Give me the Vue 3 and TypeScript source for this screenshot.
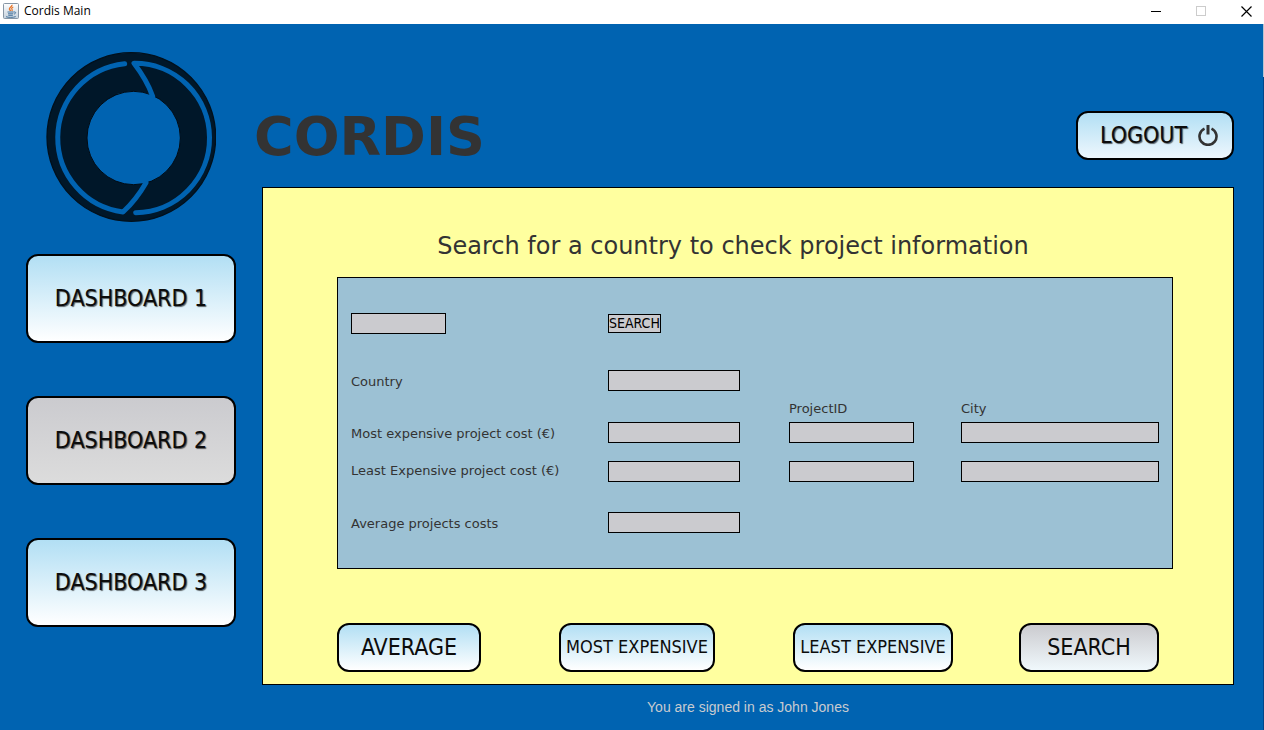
<script setup lang="ts">
import { reactive, ref } from 'vue'

interface Dashboard {
  id: number
  label: string
}

interface CostRow {
  key: 'most' | 'least'
  label: string
}

const dashboards: Dashboard[] = [
  { id: 1, label: 'DASHBOARD 1' },
  { id: 2, label: 'DASHBOARD 2' },
  { id: 3, label: 'DASHBOARD 3' },
]

const costRows: CostRow[] = [
  { key: 'most', label: 'Most expensive project cost (€)' },
  { key: 'least', label: 'Least Expensive project cost (€)' },
]

const active = ref(2)
const query = ref('')
const userName = ref('John Jones')
const result = reactive({
  country: '',
  average: '',
  most: { cost: '', project: '', city: '' },
  least: { cost: '', project: '', city: '' },
})
</script>

<template>
  <div class="window">
    <header class="titlebar">
      <svg class="app-icon" viewBox="0 0 16 16" aria-hidden="true">
        <defs>
          <linearGradient id="cup-bg" x1="0" y1="0" x2="0" y2="1">
            <stop offset="0" stop-color="#ffffff" />
            <stop offset="1" stop-color="#c3d0dc" />
          </linearGradient>
        </defs>
        <rect x=".5" y=".5" width="15" height="15" rx="1" fill="url(#cup-bg)" stroke="#8796a5" />
        <path d="M8.800 1.800c1 1.800-2.800 2.400-2.300 4.300.2.800 1 1.300 1 2" fill="none" stroke="#e8762c" stroke-width="1.500" />
        <path d="M10.300 4c-2 .8-1.900 1.600-1.200 2.500.4.5 0 1.200-.4 1.500" fill="none" stroke="#e8762c" stroke-width="1.200" />
        <path d="M4.500 9h6.300M5 10.800h5.300M5.300 12.300h4.500M3 13.700c2 .9 7.500.9 9.700-.1M11 9c2.200-.6 2.200 1.600 0 2.100" fill="none" stroke="#46749d" />
      </svg>
      <span>Cordis Main</span>
      <div class="window-controls">
        <button type="button" aria-label="Minimize">
          <svg viewBox="0 0 11 11"><path d="M0 5.500h10" stroke="#000" /></svg>
        </button>
        <button type="button" aria-label="Maximize" disabled>
          <svg viewBox="0 0 11 11"><rect x=".5" y=".5" width="9" height="9" fill="none" stroke="#ccc" /></svg>
        </button>
        <button type="button" aria-label="Close">
          <svg viewBox="0 0 11 11"><path d="M.5.5l10 10M10.500.5l-10 10" stroke="#000" stroke-width="1.200" /></svg>
        </button>
      </div>
    </header>

    <div class="body">
      <aside class="sidebar">
        <svg class="logo" viewBox="49 51 510 510" role="img" aria-label="Cordis logo">
          <circle cx="305" cy="306" r="253" fill="#001729" stroke="#00101c" stroke-width="4" />
          <circle cx="312" cy="309" r="140" fill="#0063b1" stroke="#000b14" stroke-width="3" />
          <g fill="none" stroke="#0063b1" stroke-width="15" stroke-linecap="round" stroke-linejoin="round">
            <path d="M285 86A224 224 0 0 0 280 531Q320 494 349 443" />
            <path d="M369 184Q352 136 313 85A224 224 0 0 1 318 533" />
          </g>
        </svg>
        <nav class="nav">
          <button
            v-for="d in dashboards"
            :key="d.id"
            type="button"
            class="btn btn-nav"
            :class="{ active: d.id === active }"
            @click="active = d.id"
          >
            {{ d.label }}
          </button>
        </nav>
      </aside>

      <div class="content">
        <div class="topbar">
          <h1>CORDIS</h1>
          <button type="button" class="btn btn-logout">
            LOGOUT
            <svg viewBox="0 0 20 22" aria-hidden="true">
              <path d="M6.500 4.600a8.500 8.500 0 1 0 7 0" fill="none" stroke="#333" stroke-width="2.600" />
              <path d="M10 1v9.500" stroke="#333" stroke-width="3" />
            </svg>
          </button>
        </div>

        <main class="panel">
          <h2>Search for a country to check project information</h2>

          <form class="form" @submit.prevent>
            <input v-model="query" class="field c1 query" type="text" aria-label="Search country" />
            <button type="submit" class="search-small c2">SEARCH</button>

            <label class="c1" for="country">Country</label>
            <input id="country" v-model="result.country" class="field c2 amount" type="text" />

            <label class="c3 head" for="most-project">ProjectID</label>
            <label class="c4 head" for="most-city">City</label>

            <template v-for="row in costRows" :key="row.key">
              <label class="c1" :class="'row-' + row.key" :for="row.key + '-cost'">{{ row.label }}</label>
              <input :id="row.key + '-cost'" v-model="result[row.key].cost" class="field c2 amount" :class="'row-' + row.key" type="text" />
              <input :id="row.key + '-project'" v-model="result[row.key].project" class="field c3 project" :class="'row-' + row.key" type="text" aria-label="ProjectID" />
              <input :id="row.key + '-city'" v-model="result[row.key].city" class="field c4 city" :class="'row-' + row.key" type="text" aria-label="City" />
            </template>

            <label class="c1" for="average">Average projects costs</label>
            <input id="average" v-model="result.average" class="field c2 amount" type="text" />
          </form>

          <div class="actions">
            <button type="button" class="btn average">AVERAGE</button>
            <button type="button" class="btn compact most">MOST EXPENSIVE</button>
            <button type="button" class="btn compact least">LEAST EXPENSIVE</button>
            <button type="button" class="btn search">SEARCH</button>
          </div>
        </main>

        <footer>You are signed in as {{ userName }}</footer>
      </div>
      <div class="edge"></div>
    </div>
  </div>
</template>

<style>
body {
  margin: 0;
}
</style>

<style scoped>
* {
  box-sizing: border-box;
}

.window {
  display: flex;
  flex-direction: column;
  min-height: 100vh;
  background: #0063b1;
  color: #333;
  font-family: Verdana, 'DejaVu Sans', sans-serif;
}

.titlebar {
  display: flex;
  align-items: center;
  height: 24px;
  padding: 0 12px 2px 3px;
  background: #fff;
  color: #000;
  font: 12px/20px 'Segoe UI', 'Open Sans', sans-serif;
}

.app-icon {
  width: 16px;
  height: 16px;
  margin-right: 5px;
}

.window-controls {
  display: flex;
  gap: 34px;
  margin-left: auto;
}

.window-controls button {
  width: 11px;
  height: 11px;
  padding: 0;
  border: 0;
  background: none;
}

.window-controls svg {
  display: block;
  width: 11px;
  height: 11px;
}

.body {
  display: flex;
  flex: 1;
}

.sidebar {
  flex: none;
  width: 210px;
  margin: 28px 18px 0 26px;
}

.logo {
  display: block;
  width: 170px;
  height: 170px;
  margin: 0 auto 32px;
}

.nav {
  display: grid;
  gap: 53px;
}

.btn {
  height: 49px;
  padding: 0 0 2px;
  border: 2px solid #000;
  border-radius: 12px;
  background: linear-gradient(#b2dff4, #fff);
  color: #0c0c0c;
  font: 23px/28px Tahoma, 'DejaVu Sans Condensed', sans-serif;
  white-space: nowrap;
}

.btn-nav {
  height: 89px;
  text-shadow: 1px 1px 1px rgba(0, 0, 0, 0.6);
}

.btn-nav.active {
  background: linear-gradient(#cbcbcf, #dcdcdc);
}

.content {
  display: flex;
  flex: 1;
  flex-direction: column;
  padding-right: 29px;
}

.topbar {
  display: flex;
  align-items: flex-end;
  justify-content: space-between;
  padding: 87px 0 27px;
}

h1 {
  margin: 0;
  font-size: 54px;
  line-height: 46px;
}

.btn-logout {
  display: flex;
  align-items: center;
  justify-content: space-between;
  width: 158px;
  padding: 0 14px 2px 22px;
  background: linear-gradient(#b2dff4, #eef7fd);
  text-shadow: 1px 1px 1px rgba(0, 0, 0, 0.6);
}

.btn-logout svg {
  width: 20px;
  height: 22px;
}

.panel {
  margin-left: 8px;
  padding: 43px 60px 12px 74px;
  border: 1px solid #000;
  background: #ffff9f;
}

h2 {
  margin: 0 0 16px;
  padding-right: 44px;
  font-size: 24px;
  font-weight: 400;
  line-height: 30px;
  text-align: center;
  white-space: nowrap;
}

.form {
  display: grid;
  grid-template-columns: 257fr 181fr 172fr 198fr;
  grid-template-rows: 57px 30px 22px 39px 51px 21px;
  align-items: start;
  justify-items: start;
  padding: 35px 13px;
  border: 1px solid #000;
  background: #9cc1d4;
  font-size: 13px;
}

.form label {
  line-height: 23px;
}

.form .head {
  grid-row: 3;
  line-height: 17px;
}

.c1 {
  grid-column: 1;
}

.c2 {
  grid-column: 2;
}

.c3 {
  grid-column: 3;
}

.c4 {
  grid-column: 4;
}

.row-most {
  grid-row: 4;
}

.row-least {
  grid-row: 5;
}

.form label.row-least {
  line-height: 20px;
}

.field {
  height: 21px;
  padding: 0 2px;
  border: 1px solid #000;
  border-radius: 0;
  background: #cbcbcf;
  font: inherit;
}

.query {
  width: 95px;
}

.amount {
  width: 132px;
}

.project {
  width: 125px;
}

.city {
  width: 100%;
}

.form label[for='average'],
#average {
  grid-row: 6;
}

.form label[for='average'] {
  height: 21px;
}

.search-small {
  height: 19px;
  margin-top: 1px;
  padding: 0;
  border: 1px solid #000;
  background: #cbcbcf;
  color: #000;
  font: 14px/17px Tahoma, 'DejaVu Sans Condensed', sans-serif;
}

.actions {
  display: grid;
  grid-template-columns: 222fr 234fr 226fr 140px;
  justify-items: start;
  margin: 54px 14px 0 0;
}

.compact {
  font-size: 18px;
}

.average {
  width: 144px;
}

.most {
  width: 156px;
}

.least {
  width: 160px;
}

.search {
  width: 140px;
  background: linear-gradient(#cbcbcf, #f0f8fc);
}

footer {
  margin-left: 8px;
  padding: 12px 0;
  color: #c8cbd0;
  font: 14px/20px Arial, 'Liberation Sans', sans-serif;
  text-align: center;
}

.edge {
  flex: none;
  width: 1px;
  background: linear-gradient(#b8c4d0 53px, #00468a 53px);
}
</style>
